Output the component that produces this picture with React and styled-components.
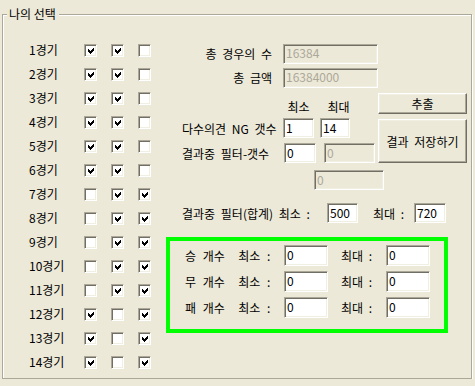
import React from "react";
import styled, { createGlobalStyle } from "styled-components";

const games = [
  [1, 1, 0],
  [1, 1, 0],
  [1, 1, 0],
  [1, 1, 0],
  [1, 1, 0],
  [1, 1, 0],
  [0, 1, 1],
  [0, 1, 1],
  [0, 1, 1],
  [0, 1, 1],
  [0, 1, 1],
  [1, 0, 1],
  [1, 0, 1],
  [1, 0, 1],
];

const counts = [
  { name: "승", min: "0", max: "0" },
  { name: "무", min: "0", max: "0" },
  { name: "패", min: "0", max: "0" },
];

function Check({ on }) {
  return (
    <Box>
      {on ? (
        <svg width="9" height="9" viewBox="0 0 9 9" shapeRendering="crispEdges">
          <polygon points="1,3 3,5 7,1 7,4 3,8 1,6" fill="#000" />
        </svg>
      ) : null}
    </Box>
  );
}

export default function App() {
  return (
    <>
      <GlobalStyle />
      <Group>
        <Title>나의 선택</Title>
        <Columns>
          <GameList>
            {games.map((row, i) => (
              <GameRow key={i}>
                <GameLabel>{i + 1}경기</GameLabel>
                {row.map((v, j) => (
                  <Check key={j} on={v} />
                ))}
              </GameRow>
            ))}
          </GameList>

          <Panel>
            <InfoRow>
              <InfoLabel>총 경우의 수</InfoLabel>
              <Field $w={95} disabled value="16384" readOnly />
            </InfoRow>
            <InfoRow $top={5}>
              <InfoLabel>총 금액</InfoLabel>
              <Field $w={95} disabled value="16384000" readOnly />
            </InfoRow>

            <Upper>
              <FilterCol>
                <HeadRow>
                  <Head $w={31}>최소</Head>
                  <Head $w={37} $left={6}>최대</Head>
                </HeadRow>
                <Row $top={3}>
                  <RowLabel>다수의견 NG 갯수</RowLabel>
                  <Field $w={31} value="1" readOnly />
                  <Field $w={30} $left={6} value="14" readOnly />
                </Row>
                <Row $top={5}>
                  <RowLabel>결과중 필터-갯수</RowLabel>
                  <Field $w={32} $left={1} value="0" readOnly />
                  <Field $w={51} $left={8} disabled value="0" readOnly />
                </Row>
              </FilterCol>
              <ButtonCol>
                <Button $h={21}>추출</Button>
                <Button $h={44}>결과 저장하기</Button>
              </ButtonCol>
            </Upper>

            <Row $top={7}>
              <Field $w={70} $left={148} disabled value="0" readOnly />
            </Row>

            <Row $top={13}>
              <RowLabel $w={161}>결과중 필터(합계) 최소 :</RowLabel>
              <Field $w={31} value="500" readOnly />
              <SideLabel $left={15} $w={41}>최대 :</SideLabel>
              <Field $w={32} value="720" readOnly />
            </Row>

            <CountBox>
              {counts.map((c) => (
                <CountRow key={c.name}>
                  <CountLabel>{`${c.name} 개수  최소 :`}</CountLabel>
                  <Field $w={44} $h={21} value={c.min} readOnly />
                  <SideLabel $left={13} $w={45}>최대 :</SideLabel>
                  <Field $w={44} $h={21} value={c.max} readOnly />
                </CountRow>
              ))}
            </CountBox>
          </Panel>
        </Columns>
      </Group>
    </>
  );
}

const GlobalStyle = createGlobalStyle`
  html, body {
    margin: 0;
    background: #ece9d8;
  }
  body {
    font-family: "Noto Sans CJK KR", "Noto Sans", sans-serif;
    font-size: 12px;
    color: #000;
  }
`;

const Group = styled.fieldset`
  box-sizing: border-box;
  width: 470px;
  min-width: 0;
  margin: 7px 0 0 2px;
  padding: 0 0 4px 0;
  border: 1px solid #aca899;
  box-shadow: 1px 1px 0 #fff, inset 1px 1px 0 #fff;
`;

const Title = styled.legend`
  margin-left: 4px;
  padding: 0 3px 0 2px;
  line-height: 14px;
  font-size: 12px;
  background: #ece9d8;
`;

const Columns = styled.div`
  display: flex;
  align-items: flex-start;
`;

const GameList = styled.div`
  width: 163px;
  padding: 17px 0 0 26px;
  box-sizing: border-box;
  display: grid;
  grid-auto-rows: 24px;
`;

const GameRow = styled.div`
  display: flex;
  align-items: center;
  gap: 14px;
`;

const GameLabel = styled.span`
  width: 41px;
  line-height: 14px;
  white-space: nowrap;
`;

const Box = styled.span`
  box-sizing: border-box;
  width: 13px;
  height: 13px;
  display: flex;
  align-items: center;
  justify-content: center;
  background: #fff;
  border-top: 1px solid #aca899;
  border-left: 1px solid #aca899;
  border-right: 1px solid #fff;
  border-bottom: 1px solid #fff;
  box-shadow: inset 1px 1px 0 #716f64, inset -1px -1px 0 #f1efe2;
  padding: 1px 0 0 1px;
`;

const Panel = styled.div`
  display: flex;
  flex-direction: column;
  padding-top: 23px;
  width: 305px;
`;

const InfoRow = styled.div`
  display: flex;
  align-items: center;
  height: 19px;
  margin-top: ${(p) => p.$top || 0}px;
`;

const InfoLabel = styled.span`
  width: 106px;
  margin-right: 11px;
  text-align: right;
  white-space: pre;
  word-spacing: 3px;
`;

const Field = styled.input`
  box-sizing: border-box;
  width: ${(p) => p.$w}px;
  height: ${(p) => p.$h || 20}px;
  margin: 0 0 0 ${(p) => p.$left || 0}px;
  padding: 0 2px 2px 2px;
  font-family: "Noto Sans CJK KR", "Noto Sans", sans-serif;
  font-size: 12px;
  color: #000;
  background: #fff;
  border-top: 1px solid #aca899;
  border-left: 1px solid #aca899;
  border-right: 1px solid #fff;
  border-bottom: 1px solid #fff;
  box-shadow: inset 1px 1px 0 #716f64, inset -1px -1px 0 #f1efe2;
  outline: none;

  &:disabled {
    background: #ece9d8;
    color: #aca899;
  }
`;

const Upper = styled.div`
  display: flex;
  margin-top: 6px;
`;

const FilterCol = styled.div`
  width: 212px;
  display: flex;
  flex-direction: column;
`;

const HeadRow = styled.div`
  display: flex;
  align-items: flex-end;
  height: 22px;
  padding-left: 117px;
`;

const Head = styled.span`
  width: ${(p) => p.$w}px;
  margin-left: ${(p) => p.$left || 0}px;
  text-align: center;
  line-height: 16px;
`;

const Row = styled.div`
  display: flex;
  align-items: center;
  height: 20px;
  margin-top: ${(p) => p.$top || 0}px;
`;

const RowLabel = styled.span`
  box-sizing: border-box;
  width: ${(p) => p.$w || 117}px;
  padding-left: 16px;
  white-space: pre;
  word-spacing: 3px;
`;

const SideLabel = styled.span`
  width: ${(p) => p.$w}px;
  margin-left: ${(p) => p.$left}px;
  white-space: pre;
  word-spacing: 3px;
`;

const ButtonCol = styled.div`
  display: flex;
  flex-direction: column;
  gap: 5px;
`;

const Button = styled.button`
  box-sizing: border-box;
  width: 89px;
  height: ${(p) => p.$h}px;
  padding: 0;
  font-family: "Noto Sans CJK KR", "Noto Sans", sans-serif;
  font-size: 12px;
  color: #000;
  background: #ece9d8;
  border-top: 1px solid #fff;
  border-left: 1px solid #fff;
  border-right: 1px solid #716f64;
  border-bottom: 1px solid #716f64;
  box-shadow: inset -1px -1px 0 #aca899, inset 1px 1px 0 #f1efe2;
  word-spacing: 3px;
`;

const CountBox = styled.div`
  box-sizing: border-box;
  width: 282px;
  height: 96px;
  margin-top: 14px;
  border: 4px solid #00ff00;
  padding: 4px 0 0 15px;
  display: flex;
  flex-direction: column;
  gap: 5px;
`;

const CountRow = styled.div`
  display: flex;
  align-items: center;
  height: 21px;
`;

const CountLabel = styled.span`
  width: 99px;
  white-space: pre;
  word-spacing: 4px;
`;
